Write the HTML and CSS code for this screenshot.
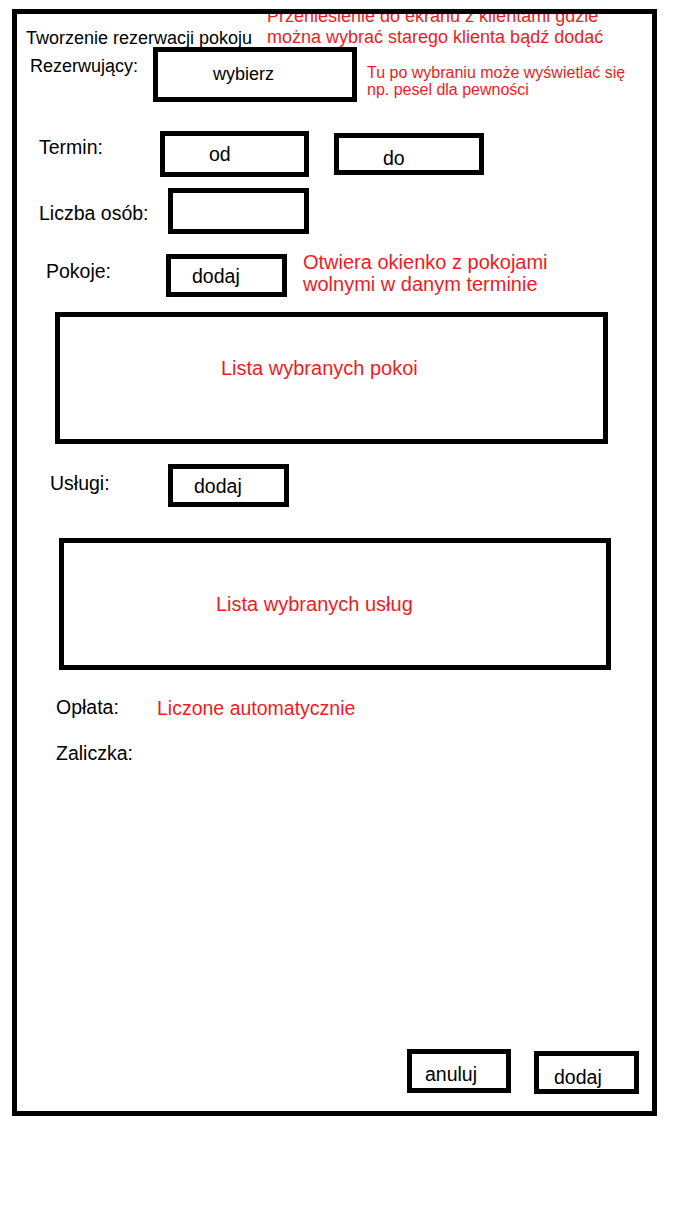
FILE: index.html
```html
<!DOCTYPE html>
<html lang="pl">
<head>
  <meta charset="UTF-8" />
  <meta name="viewport" content="width=device-width, initial-scale=1.0"/>
  <title>Tworzenie rezerwacji pokoju</title>
  <link rel="stylesheet" href="styles.css">
</head>
<body>
  <div class="frame">
    <div class="row head">
      <h1 class="title">Tworzenie rezerwacji pokoju</h1>
      <p class="note note-top">Przeniesienie do ekranu z klientami gdzie<br>można wybrać starego klienta bądź dodać</p>
    </div>

    <div class="row row-client">
      <span class="label label-client">Rezerwujący:</span>
      <div class="box box-pick">wybierz</div>
      <p class="note note-small">Tu po wybraniu może wyświetlać się<br>np. pesel dla pewności</p>
    </div>

    <div class="row row-term">
      <span class="label label-term">Termin:</span>
      <div class="box box-from">od</div>
      <div class="box box-to">do</div>
    </div>

    <div class="row row-people">
      <span class="label label-people">Liczba osób:</span>
      <div class="box box-people"></div>
    </div>

    <div class="row row-rooms">
      <span class="label label-rooms">Pokoje:</span>
      <div class="box box-add">dodaj</div>
      <p class="note note-rooms">Otwiera okienko z pokojami<br>wolnymi w danym terminie</p>
    </div>

    <div class="box list list-rooms">Lista wybranych pokoi</div>

    <div class="row row-services">
      <span class="label label-services">Usługi:</span>
      <div class="box box-add">dodaj</div>
    </div>

    <div class="box list list-services">Lista wybranych usług</div>

    <div class="row row-fee">
      <span class="label label-fee">Opłata:</span>
      <span class="note note-fee">Liczone automatycznie</span>
    </div>

    <div class="row row-deposit">
      <span class="label label-fee">Zaliczka:</span>
    </div>

    <div class="row actions">
      <button class="box btn-cancel">anuluj</button>
      <button class="box btn-add">dodaj</button>
    </div>
  </div>
</body>
</html>
```

FILE: styles.css
```css
* {
  box-sizing: border-box;
  margin: 0;
  padding: 0;
}

body {
  font-family: "Liberation Sans", Arial, sans-serif;
  color: #000;
  background: #fff;
}

.frame {
  width: 645px;
  height: 1107px;
  margin: 9px 0 0 12px;
  border: 5px solid #000;
  display: flex;
  flex-direction: column;
  overflow: hidden;
  padding-bottom: 17px;
}

.row {
  display: flex;
  align-items: flex-start;
}

.label {
  font-size: 19.5px;
  line-height: 19px;
  flex-shrink: 0;
}

.note {
  color: #ed1c24;
  white-space: nowrap;
}

.box {
  border: 5px solid #000;
  background: #fff;
  font-family: inherit;
  font-size: 19.5px;
  line-height: 19px;
  text-align: left;
  color: #000;
  flex-shrink: 0;
}

/* header */
.head {
  margin-top: -8px;
}

.title {
  font-size: 18px;
  font-weight: normal;
  line-height: 1;
  width: 241px;
  margin: 23px 0 0 9px;
}

.note-top {
  font-size: 18px;
  line-height: 21px;
}

/* rezerwujacy */
.row-client {
  margin-top: -1px;
}

.label-client {
  font-size: 18px;
  width: 123px;
  margin: 10px 0 0 13px;
}

.box-pick {
  width: 204px;
  height: 55px;
  font-size: 18px;
  padding: 13px 0 0 55px;
}

.note-small {
  font-size: 16px;
  line-height: 17px;
  margin: 17px 0 0 10px;
}

/* termin */
.row-term {
  margin-top: 29px;
}

.label-term {
  width: 121px;
  margin: 7px 0 0 22px;
}

.box-from {
  width: 149px;
  height: 46px;
  padding: 9px 0 0 44px;
}

.box-to {
  width: 150px;
  height: 42px;
  margin: 2px 0 0 25px;
  padding: 11px 0 0 44px;
}

/* liczba osob */
.row-people {
  margin-top: 11px;
}

.label-people {
  width: 129px;
  margin: 16px 0 0 22px;
}

.box-people {
  width: 141px;
  height: 46px;
}

/* pokoje */
.row-rooms {
  margin-top: 17px;
}

.label-rooms {
  width: 120px;
  margin: 11px 0 0 29px;
}

.box-add {
  width: 121px;
  height: 43px;
  padding: 8px 0 0 21px;
}

.row-rooms .box-add {
  margin-top: 3px;
}

.note-rooms {
  font-size: 20px;
  line-height: 22px;
  margin-left: 16px;
}

/* listy */
.list {
  color: #ed1c24;
  font-size: 20px;
  line-height: 20px;
  height: 132px;
}

.list-rooms {
  width: 553px;
  margin: 15px 0 0 38px;
  padding: 41px 0 0 161px;
}

.row-services {
  margin-top: 20px;
}

.label-services {
  width: 118px;
  margin: 10px 0 0 33px;
}

.list-services {
  width: 552px;
  margin: 31px 0 0 42px;
  padding: 51px 0 0 152px;
}

/* oplata */
.row-fee {
  margin-top: 28px;
}

.label-fee {
  width: 101px;
  margin-left: 39px;
}

.note-fee {
  font-size: 19.5px;
  line-height: 19px;
  margin-top: 1px;
}

.row-deposit {
  margin-top: 26px;
}

/* przyciski */
.actions {
  margin-top: auto;
  justify-content: flex-end;
  gap: 23px;
  padding-right: 13px;
}

.btn-cancel {
  width: 104px;
  height: 44px;
  padding: 6px 0 0 13px;
}

.btn-add {
  width: 105px;
  height: 43px;
  margin-top: 2px;
  padding: 9px 0 0 15px;
}
```
